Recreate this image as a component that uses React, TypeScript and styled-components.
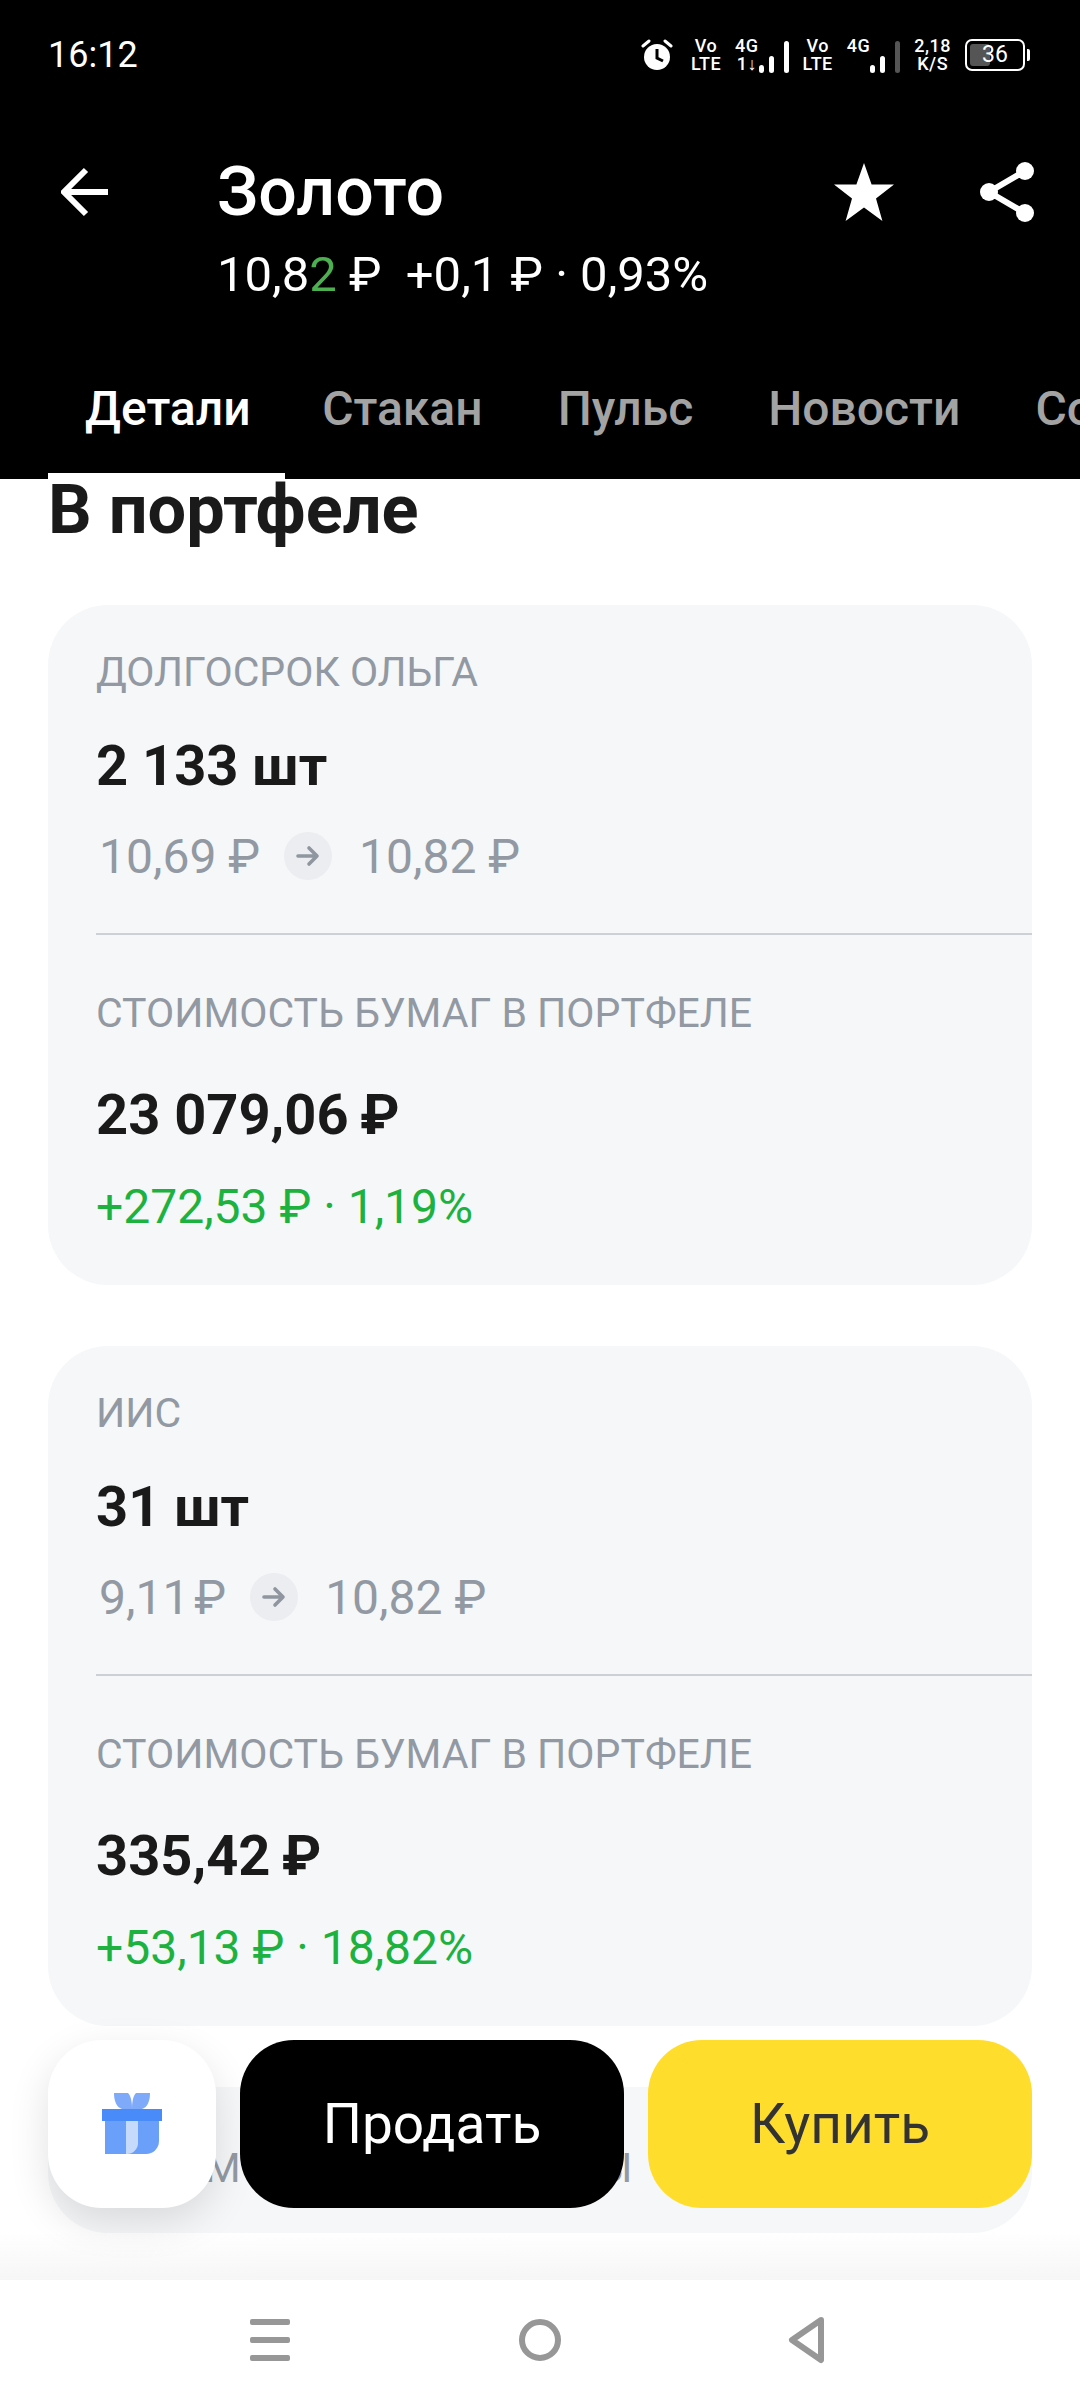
import React from "react"
import styled, { createGlobalStyle } from "styled-components"

const GlobalStyle = createGlobalStyle`
  html, body {
    margin: 0;
    padding: 0;
    background: #fff;
  }
  body {
    font-family: Roboto, "Noto Sans", sans-serif;
    color: #1a1a1a;
  }
`

const Screen = styled.div`
  position: relative;
  width: 1080px;
  height: 2400px;
  display: flex;
  flex-direction: column;
  overflow: hidden;
  background: #fff;
`

/* header */

const Header = styled.header`
  position: relative;
  z-index: 2;
  flex: none;
  height: 479px;
  display: flex;
  flex-direction: column;
  background: #000;
  color: #fff;
`

const StatusBar = styled.div`
  height: 110px;
  display: flex;
  align-items: center;
  justify-content: space-between;
  padding: 0 48px;
`

const Clock = styled.span`
  font-size: 36px;
  line-height: 40px;
`

const StatusIcons = styled.div`
  display: flex;
  align-items: center;
  gap: 14px;
  margin-right: 7px;
`

const AlarmIcon = styled.svg`
  width: 32px;
  height: 32px;
  margin-right: 4px;
`

const TinyStack = styled.div`
  display: flex;
  flex-direction: column;
  align-items: center;
  font-size: 18px;
  line-height: 18px;
  letter-spacing: 0.5px;
  font-weight: 500;
`

const Signal = styled.div`
  display: flex;
  align-items: flex-end;
`

const Battery = styled.div`
  position: relative;
  width: 60px;
  height: 32px;
  box-sizing: border-box;
  border: 2px solid #fff;
  border-radius: 7px;
  display: flex;
  align-items: center;
  justify-content: center;
  font-size: 23px;
  line-height: 28px;

  &::before {
    content: "";
    position: absolute;
    left: 3px;
    top: 3px;
    bottom: 3px;
    width: 20px;
    border-radius: 3px;
    background: #555;
  }
  &::after {
    content: "";
    position: absolute;
    right: -7px;
    top: 8px;
    width: 3px;
    height: 12px;
    border-radius: 0 2px 2px 0;
    background: #fff;
  }
`

const BatteryValue = styled.span`
  position: relative;
`

const TitleRow = styled.div`
  display: flex;
  margin-top: 40px;
  padding-left: 61px;
`

const BackIcon = styled.svg`
  flex: none;
  width: 47px;
  height: 50px;
  margin-top: 17px;
`

const TitleBlock = styled.div`
  flex: 1;
  margin-left: 109px;
`

const Title = styled.h1`
  margin: 0;
  font-size: 68px;
  line-height: 84px;
  font-weight: 500;
`

const Subtitle = styled.div`
  font-size: 49px;
  line-height: 56px;
  margin-top: 13px;
  white-space: pre;
`

const Tick = styled.span`
  color: #4caf50;
`

const HeaderActions = styled.div`
  flex: none;
  display: flex;
  gap: 85px;
  margin: 12px 45px 0 0;
  height: 60px;
  align-items: center;
`

const TabBar = styled.nav`
  position: relative;
  flex: none;
  margin-top: auto;
  height: 119px;
  display: flex;
  padding-left: 48px;
  overflow: hidden;
`

const Tab = styled.div<{ $active?: boolean }>`
  position: relative;
  flex: none;
  padding: ${(p) => (p.$active ? "0 34px 0 37px" : "0 37.5px")};
  height: 119px;
  line-height: 98px;
  font-size: 48px;
  font-weight: 500;
  color: ${(p) => (p.$active ? "#fff" : "#a3a3a3")};

  &::after {
    content: "";
    display: ${(p) => (p.$active ? "block" : "none")};
    position: absolute;
    left: 0;
    right: 0;
    bottom: 0;
    height: 6px;
    background: #fff;
  }
`

/* scrolled content */

const Content = styled.main`
  position: relative;
  flex: 1;
  min-height: 0;
  overflow: hidden;
  padding: 0 48px;
`

const Heading = styled.h2`
  margin: 0 0 64px;
  font-size: 68.5px;
  line-height: 62px;
  font-weight: 700;
  color: #1a1a1a;
`

const Card = styled.section<{ $peek?: boolean }>`
  box-sizing: border-box;
  margin-bottom: ${(p) => (p.$peek ? "0" : "61px")};
  padding: ${(p) => (p.$peek ? "61px" : "47px")} 0 0 48px;
  height: ${(p) => (p.$peek ? "146px" : "680px")};
  border-radius: 60px;
  background: #f5f7f9;
`

const Label = styled.div<{ $spaced?: boolean }>`
  font-size: 41px;
  line-height: 40px;
  letter-spacing: ${(p) => (p.$spaced ? "0.3px" : "0")};
  color: #9299a2;
  white-space: nowrap;
`

const Strong = styled.div`
  margin-top: 44px;
  font-size: 56px;
  line-height: 60px;
  font-weight: 700;
  color: #1a1a1a;
`

const PriceRow = styled.div`
  display: flex;
  align-items: center;
  margin-top: 32px;
  height: 56px;
  padding-left: 3px;
  font-size: 48px;
  color: #9299a2;
`

const ArrowDot = styled.span`
  flex: none;
  width: 48px;
  height: 48px;
  margin: 0 27px 0 24px;
  border-radius: 50%;
  background: #ebedf0;
  display: flex;
  align-items: center;
  justify-content: center;
`

const Divider = styled.div`
  height: 2px;
  margin: 49px 0 58px;
  background: #cdd0d4;
`

const ValueBlock = styled(Strong)`
  margin-top: 52px;
`

const Change = styled.div`
  margin-top: 34px;
  font-size: 48px;
  line-height: 56px;
  color: #1db23f;
`

/* floating buttons */

const ActionBar = styled.div`
  position: absolute;
  z-index: 3;
  left: 48px;
  right: 48px;
  bottom: 192px;
  display: grid;
  grid-template-columns: 168px 1fr 1fr;
  gap: 24px;
`

const GiftButton = styled.button`
  height: 168px;
  border: 0;
  border-radius: 54px;
  background: #fff;
  box-shadow: 0 14px 40px rgba(0, 0, 0, 0.12);
  display: flex;
  align-items: center;
  justify-content: center;
  padding: 0;
`

const TradeButton = styled.button<{ $buy?: boolean }>`
  height: 168px;
  border: 0;
  border-radius: 54px;
  font-family: inherit;
  font-size: 55px;
  background: ${(p) => (p.$buy ? "#ffdd2d" : "#000")};
  color: ${(p) => (p.$buy ? "#333" : "#fff")};
`

/* system navigation */

const SystemNav = styled.div`
  position: relative;
  z-index: 2;
  flex: none;
  height: 120px;
  box-sizing: border-box;
  background: #fff;
  display: flex;
  align-items: center;
  justify-content: center;
  padding-right: 4px;
  gap: 229px;

  &::before {
    content: "";
    position: absolute;
    left: 0;
    right: 0;
    top: -48px;
    height: 48px;
    background: linear-gradient(rgba(245, 245, 245, 0), #f6f6f6);
  }
`

const Hamburger = styled.div`
  width: 40px;
  height: 42px;
  display: flex;
  flex-direction: column;
  justify-content: space-between;

  & > span {
    height: 6px;
    border-radius: 2px;
    background: #979797;
  }
`

const HomeRing = styled.div`
  width: 42px;
  height: 42px;
  box-sizing: border-box;
  border: 6px solid #979797;
  border-radius: 50%;
`

const BackTriangle = styled.svg`
  width: 38px;
  height: 48px;
  margin-left: -2px;
`

const Bars = ({ dimLast }: { dimLast?: boolean }) => (
  <svg width="30" height="32" viewBox="0 0 30 32">
    <rect x="0" y="24" width="5" height="8" rx="2.5" fill="#fff" />
    <rect x="10" y="15" width="5" height="17" rx="2.5" fill="#fff" />
    <rect x="25" y="0" width="5" height="32" rx="2.5" fill={dimLast ? "#555" : "#fff"} />
  </svg>
)

const Alarm = () => (
  <AlarmIcon viewBox="0 0 32 32">
    <circle cx="16" cy="18" r="13" fill="#fff" />
    <path d="M16 10v9l6 3" fill="none" stroke="#000" strokeWidth="3" />
    <path d="M2 7l6-5M30 7l-6-5" fill="none" stroke="#fff" strokeWidth="3" strokeLinecap="round" />
  </AlarmIcon>
)

const PriceArrow = () => (
  <svg width="24" height="24" viewBox="0 0 24 24">
    <path
      d="M2 12h19M13 4l8 8-8 8"
      fill="none"
      stroke="#8f96a0"
      strokeWidth="3.6"
      strokeLinecap="round"
      strokeLinejoin="round"
    />
  </svg>
)

const Gift = () => (
  <svg width="60" height="62" viewBox="0 0 60 62">
    <path d="M12 0h14c3 3 4 9 4 16H20C14 14 12 7 12 0z" fill="#7eaaf9" />
    <path d="M48 0H34c-3 3-4 9-4 16h10c6-2 8-9 8-16z" fill="#7eaaf9" />
    <path d="M3 28h54v20a13 13 0 0 1-13 13H3z" fill="#6ba0fa" />
    <path d="M24 28h12v22a11 11 0 0 1-11 11h-1z" fill="#c6dafc" />
    <rect x="0" y="16" width="60" height="12" fill="#4a8bfa" />
  </svg>
)

type Position = {
  account: string
  qty: string
  buy: string
  last: string
  value: string
  change: string
}

const positions: Position[] = [
  {
    account: "ДОЛГОСРОК ОЛЬГА",
    qty: "2 133 шт",
    buy: "10,69 ₽",
    last: "10,82 ₽",
    value: "23 079,06\u2009₽",
    change: "+272,53 ₽ · 1,19%",
  },
  {
    account: "ИИС",
    qty: "31 шт",
    buy: "9,11\u200a₽",
    last: "10,82 ₽",
    value: "335,42\u2009₽",
    change: "+53,13 ₽ · 18,82%",
  },
]

const App = () => {
  return (
    <Screen>
      <GlobalStyle />
      <Header>
        <StatusBar>
          <Clock>16:12</Clock>
          <StatusIcons>
            <Alarm />
            <TinyStack>
              <span>Vo</span>
              <span>LTE</span>
            </TinyStack>
            <Signal>
              <TinyStack>
                <span>4G</span>
                <span>1↓</span>
              </TinyStack>
              <Bars />
            </Signal>
            <TinyStack>
              <span>Vo</span>
              <span>LTE</span>
            </TinyStack>
            <Signal>
              <TinyStack>
                <span>4G</span>
                <span>&nbsp;</span>
              </TinyStack>
              <Bars dimLast />
            </Signal>
            <TinyStack>
              <span>2,18</span>
              <span>K/S</span>
            </TinyStack>
            <Battery>
              <BatteryValue>36</BatteryValue>
            </Battery>
          </StatusIcons>
        </StatusBar>

        <TitleRow>
          <BackIcon viewBox="0 0 47 50">
            <path d="M25 3L3 25l22 22M3 25h44" fill="none" stroke="#fff" strokeWidth="6" />
          </BackIcon>
          <TitleBlock>
            <Title>Золото</Title>
            <Subtitle>
              10,8<Tick>2</Tick> ₽  +0,1 ₽ · 0,93%
            </Subtitle>
          </TitleBlock>
          <HeaderActions>
            <svg width="60" height="58" viewBox="0 0 60 58">
              <path d="M30 0l7.6 21.6H60L42 35.4 48.4 58 30 44.6 11.6 58 18 35.4 0 21.6h22.4z" fill="#fff" />
            </svg>
            <svg width="56" height="60" viewBox="0 0 56 60">
              <path d="M46 9L10 30l36 21" fill="none" stroke="#fff" strokeWidth="6" />
              <circle cx="46" cy="9" r="9" fill="#fff" />
              <circle cx="10" cy="30" r="9" fill="#fff" />
              <circle cx="46" cy="51" r="9" fill="#fff" />
            </svg>
          </HeaderActions>
        </TitleRow>

        <TabBar>
          <Tab $active>Детали</Tab>
          <Tab>Стакан</Tab>
          <Tab>Пульс</Tab>
          <Tab>Новости</Tab>
          <Tab>События</Tab>
        </TabBar>
      </Header>

      <Content>
        <Heading>В портфеле</Heading>
        {positions.map((item) => (
          <Card key={item.account}>
            <Label>{item.account}</Label>
            <Strong>{item.qty}</Strong>
            <PriceRow>
              <span>{item.buy}</span>
              <ArrowDot>
                <PriceArrow />
              </ArrowDot>
              <span>{item.last}</span>
            </PriceRow>
            <Divider />
            <Label>СТОИМОСТЬ БУМАГ В ПОРТФЕЛЕ</Label>
            <ValueBlock>{item.value}</ValueBlock>
            <Change>{item.change}</Change>
          </Card>
        ))}
        <Card $peek>
          <Label $spaced>СТОИМОСТЬ ДО ВЫПЛАТЫ</Label>
        </Card>
      </Content>

      <ActionBar>
        <GiftButton>
          <Gift />
        </GiftButton>
        <TradeButton>Продать</TradeButton>
        <TradeButton $buy>Купить</TradeButton>
      </ActionBar>

      <SystemNav>
        <Hamburger>
          <span />
          <span />
          <span />
        </Hamburger>
        <HomeRing />
        <BackTriangle viewBox="0 0 38 48">
          <path
            d="M33 4L4 24l29 20z"
            fill="none"
            stroke="#979797"
            strokeWidth="6"
            strokeLinejoin="round"
          />
        </BackTriangle>
      </SystemNav>
    </Screen>
  )
}

export default App
